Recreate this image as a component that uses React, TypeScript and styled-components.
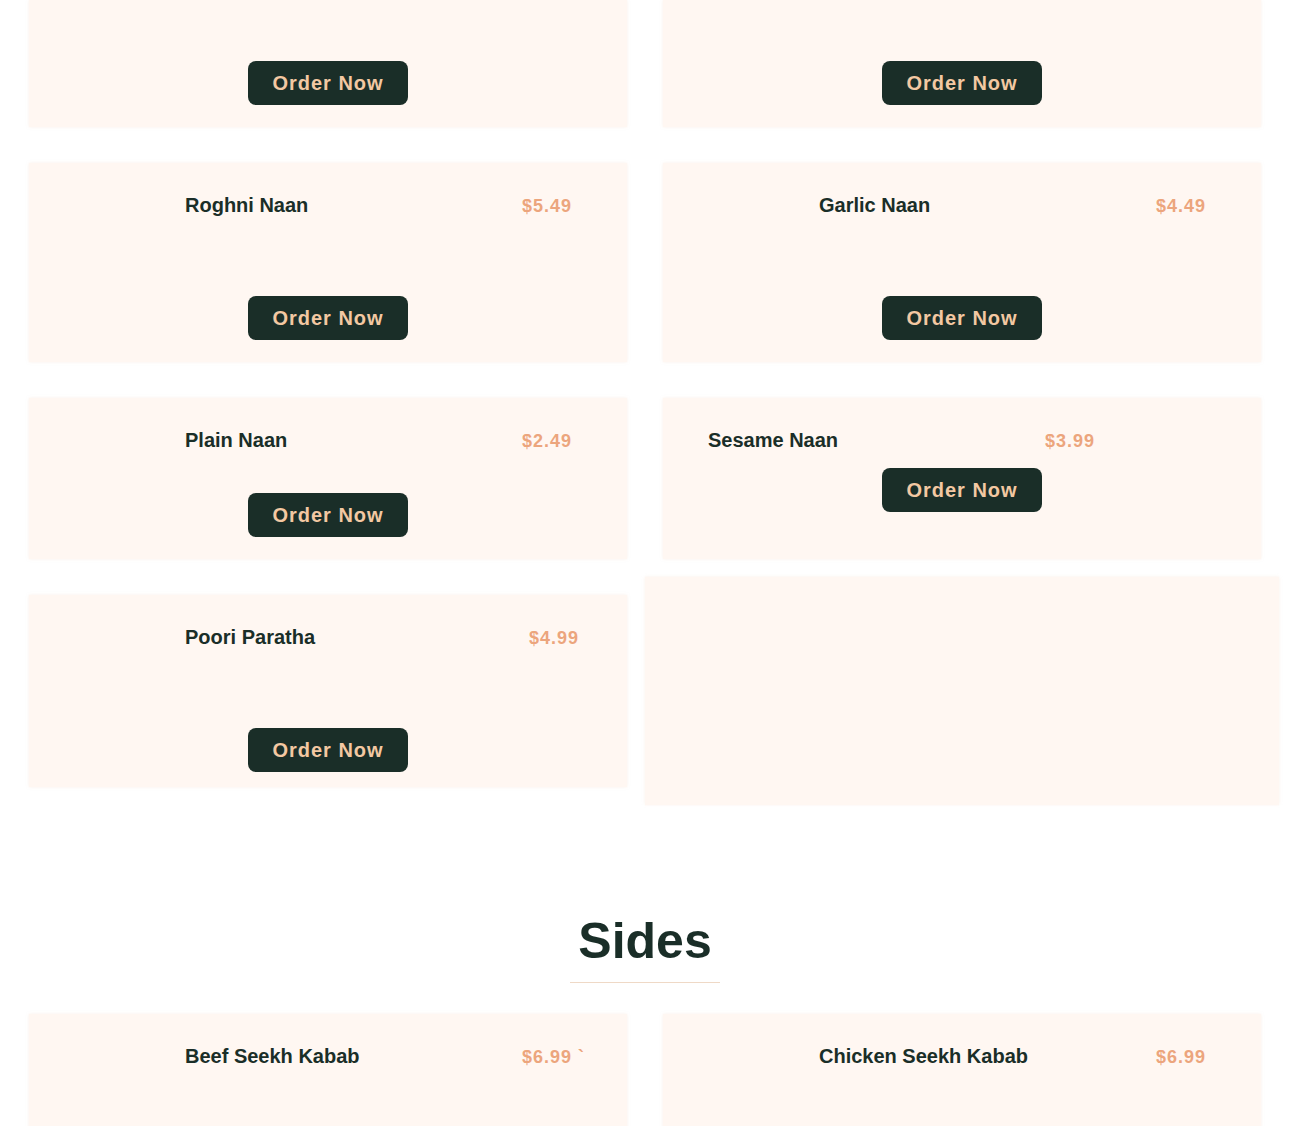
import React from "react";
import styled, { createGlobalStyle } from "styled-components";

const colors = {
  cream: "#fff7f2",
  dark: "#1a2e28",
  peach: "#f3c8a2",
  price: "#eca57d",
  line: "#efd9c6",
};

const GlobalStyle = createGlobalStyle`
  body {
    margin: 0;
    background: #ffffff;
    font-family: "Liberation Sans", Arial, sans-serif;
  }
`;

const Page = styled.main`
  width: 1232px;
  padding-left: 29px;
`;

const Grid = styled.div`
  display: grid;
  grid-template-columns: 598px 598px;
  column-gap: 36px;
  row-gap: 36px;
`;

const Card = styled.div<{ $top: number; $bottom: number; $hover?: boolean }>`
  display: flex;
  flex-direction: column;
  background-color: ${colors.cream};
  padding: ${(p) => p.$top}px 45px ${(p) => p.$bottom}px;
  box-shadow: 0 0 3px rgba(240, 215, 195, 0.35);
  ${(p) => p.$hover && "transform: scale(1.06, 1.19); z-index: 1;"}
`;

const Header = styled.div`
  display: flex;
  align-items: center;
  height: 24px;
`;

const Thumb = styled.div`
  width: 96px;
  height: 24px;
  margin-right: 15px;
  flex: none;
`;

const Title = styled.h3<{ $width: number }>`
  margin: 0;
  flex: 0 0 ${(p) => p.$width}px;
  font-size: 20px;
  line-height: 24px;
  font-weight: 700;
  color: ${colors.dark};
`;

const Price = styled.span`
  font-size: 18px;
  line-height: 24px;
  font-weight: 700;
  letter-spacing: 1px;
  color: ${colors.price};
  margin-top: 2px;
  white-space: pre;
`;

const Spacer = styled.div<{ $h: number }>`
  height: ${(p) => p.$h}px;
`;

const OrderButton = styled.button`
  align-self: center;
  width: 160px;
  height: 44px;
  border: none;
  border-radius: 8px;
  background-color: ${colors.dark};
  color: ${colors.peach};
  font-family: "Liberation Sans", Arial, sans-serif;
  font-size: 20px;
  font-weight: 700;
  letter-spacing: 1px;
  cursor: pointer;
`;

const SectionHead = styled.div`
  display: flex;
  flex-direction: column;
  align-items: center;
  margin-top: 126px;
  margin-bottom: 31px;
`;

const SectionTitle = styled.h2`
  margin: 0;
  font-size: 50px;
  line-height: 56px;
  font-weight: 700;
  color: ${colors.dark};
`;

const Divider = styled.div`
  width: 150px;
  height: 1px;
  margin-top: 13px;
  background-color: ${colors.line};
`;

type Item = {
  name?: string;
  price?: string;
  image?: boolean;
  titleWidth?: number;
  space: number;
  top?: number;
  bottom?: number;
  empty?: boolean;
  hover?: boolean;
};

const breads: Item[] = [
  { space: 61, top: 0, bottom: 22 },
  { space: 61, top: 0, bottom: 22 },
  { name: "Roghni Naan", price: "$5.49", image: true, space: 79, bottom: 22 },
  { name: "Garlic Naan", price: "$4.49", image: true, space: 79, bottom: 22 },
  { name: "Plain Naan", price: "$2.49", image: true, space: 41, bottom: 22 },
  { name: "Sesame Naan", price: "$3.99", space: 16 },
  { name: "Poori Paratha", price: "$4.99", image: true, titleWidth: 344, space: 79, bottom: 15 },
  { empty: true, hover: true, space: 0, top: 0, bottom: 0 },
];

const sides: Item[] = [
  { name: "Beef Seekh Kabab", price: "$6.99 `", image: true, space: 79 },
  { name: "Chicken Seekh Kabab", price: "$6.99", image: true, space: 79 },
];

function MenuCard({ item }: { item: Item }) {
  return (
    <Card $top={item.top ?? 30} $bottom={item.bottom ?? 21} $hover={item.hover}>
      {item.name && (
        <Header>
          {item.image && <Thumb />}
          <Title $width={item.titleWidth ?? 337}>{item.name}</Title>
          <Price>{item.price}</Price>
        </Header>
      )}
      {!item.empty && (
        <>
          <Spacer $h={item.space} />
          <OrderButton>Order Now</OrderButton>
        </>
      )}
    </Card>
  );
}

export default function App() {
  return (
    <>
      <GlobalStyle />
      <Page>
        <Grid>
          {breads.map((b, i) => (
            <MenuCard key={i} item={b} />
          ))}
        </Grid>
        <SectionHead>
          <SectionTitle>Sides</SectionTitle>
          <Divider />
        </SectionHead>
        <Grid>
          {sides.map((s, i) => (
            <MenuCard key={i} item={s} />
          ))}
        </Grid>
      </Page>
    </>
  );
}
